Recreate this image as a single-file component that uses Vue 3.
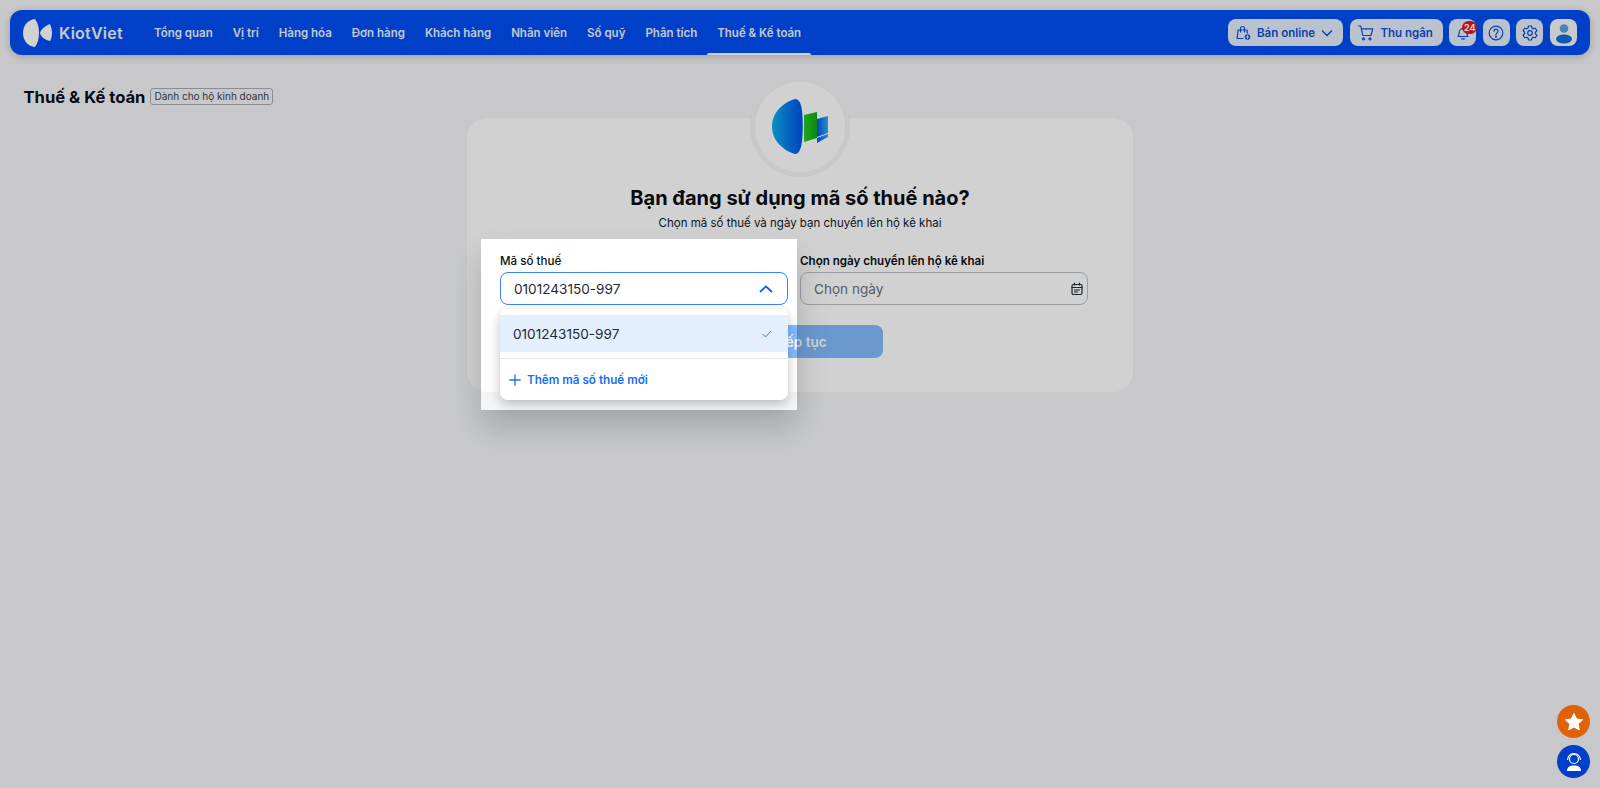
<script setup>
const navItems = ['Tổng quan', 'Vị trí', 'Hàng hóa', 'Đơn hàng', 'Khách hàng', 'Nhân viên', 'Số quỹ', 'Phân tích', 'Thuế & Kế toán']
</script>

<template>
  <div class="page">
    <header class="topbar">
      <div class="brand">
        <svg class="brand-mark" width="30" height="30" viewBox="1 0 30 30">
          <path d="M13 1 C5 2 1 8 1 15 C1 22 5 28 13 29 C16 25 17 20 17 15 C17 10 16 5 13 1 Z" fill="#fff" />
          <path d="M28 6 C23 8 19 11 18 15 C19 19 23 22 28 23 C29.500 20 30 18 30 15 C30 12 29.500 10 28 6 Z" fill="#fff" />
        </svg>
        <span class="brand-name">KiotViet</span>
      </div>
      <nav class="nav">
        <a v-for="(item, i) in navItems" :key="item" class="nav-item" :class="{ active: i === navItems.length - 1 }">{{ item }}</a>
      </nav>
      <div class="actions">
        <button class="action wide online">
          <svg width="18" height="18" viewBox="0 0 18 18" fill="none" stroke="currentColor" stroke-width="1.200" stroke-linejoin="round" stroke-linecap="round">
            <path d="M9 14.500H3.200L4 6h9l.4 3" />
            <path d="M6.500 8V4.500a2 2 0 0 1 4 0V8" />
            <circle cx="13.500" cy="13" r="2.800" fill="currentColor" stroke="none" />
            <path d="M12 13h3M13.500 11.500v3" stroke="#e0ecff" stroke-width="0.900" />
          </svg>
          <span>Bán online</span>
          <svg width="14" height="14" viewBox="0 0 14 14" fill="none" stroke="currentColor" stroke-width="1.400" stroke-linecap="round" stroke-linejoin="round"><path d="M2.500 5l4.500 4.500L11.500 5" /></svg>
        </button>
        <button class="action wide cashier">
          <svg width="18" height="18" viewBox="0 0 18 18" fill="none" stroke="currentColor" stroke-width="1.200" stroke-linecap="round" stroke-linejoin="round">
            <path d="M1.500 2h2.300l2 9.500h8.200l1.700-6.700H4.400" />
            <circle cx="6.500" cy="14.800" r="1" />
            <circle cx="13" cy="14.800" r="1" />
          </svg>
          <span>Thu ngân</span>
        </button>
        <button class="action square bell">
          <svg width="16" height="16" viewBox="0 0 16 16" fill="none" stroke="currentColor" stroke-width="1.200" stroke-linecap="round" stroke-linejoin="round">
            <path d="M3 11.500c1-1 1.200-2 1.200-4a3.800 3.800 0 0 1 7.600 0c0 2 .2 3 1.200 4Z" />
            <path d="M6.500 13.800h3" />
          </svg>
          <span class="badge">24</span>
        </button>
        <button class="action square">
          <svg width="18" height="18" viewBox="0 0 18 18" fill="none" stroke="currentColor" stroke-width="1.200" stroke-linecap="round">
            <circle cx="9" cy="9" r="6.800" />
            <path d="M7 7.200a2 2 0 1 1 3 1.700c-.7.400-1 .8-1 1.500" />
            <circle cx="9" cy="12.700" r="0.500" fill="currentColor" />
          </svg>
        </button>
        <button class="action square">
          <svg width="18" height="18" viewBox="0 0 18 18" fill="none" stroke="currentColor" stroke-width="1.200" stroke-linejoin="round">
            <path d="M7.500 2h3l.5 2 1.400.8 2-.6 1.500 2.600-1.500 1.400v1.600l1.500 1.400-1.500 2.600-2-.6-1.400.8-.5 2h-3l-.5-2-1.400-.8-2 .6-1.500-2.600 1.500-1.400V8.200L2.100 6.800l1.500-2.600 2 .6L7 4Z" />
            <circle cx="9" cy="9" r="2.300" />
          </svg>
        </button>
        <button class="action square avatar">
          <svg width="24" height="24" viewBox="0 0 24 24">
            <circle cx="12" cy="7.500" r="4.300" fill="#5c9fe8" />
            <ellipse cx="12" cy="18" rx="8" ry="4.500" fill="#0d6fd8" />
          </svg>
        </button>
      </div>
    </header>

    <div class="heading">
      <h1>Thuế &amp; Kế toán</h1>
      <span class="tag">Dành cho hộ kinh doanh</span>
    </div>

    <main class="card">
      <div class="emblem">
        <svg width="60" height="60" viewBox="0 0 60 60">
          <defs>
            <linearGradient id="leaf" x1="0" y1="0" x2="1" y2="0">
              <stop offset="0" stop-color="#0cb0f0" />
              <stop offset="1" stop-color="#0050e8" />
            </linearGradient>
            <linearGradient id="green" x1="0" y1="0" x2="1" y2="0">
              <stop offset="0" stop-color="#22cc20" />
              <stop offset="1" stop-color="#10a818" />
            </linearGradient>
            <linearGradient id="blue" x1="0" y1="0" x2="1" y2="0">
              <stop offset="0" stop-color="#0a50f0" />
              <stop offset="1" stop-color="#30b0f8" />
            </linearGradient>
          </defs>
          <path d="M25 2 C12 6 2 16 2 29.500 C2 43 12 53 25 57 C29 57 31 52 32 44 C33 36 33 22 32 14 C31 6 29 2 25 2 Z" fill="url(#leaf)" />
          <path d="M34 18 L47 15 V41 L34 45 Z" fill="url(#green)" />
          <path d="M47 22 L58 19 V36 L47 40 Z" fill="url(#blue)" />
          <path d="M47 41 L58 37 V40 L47 46 Z" fill="url(#blue)" />
        </svg>
      </div>
      <h2 class="card-title">Bạn đang sử dụng mã số thuế nào?</h2>
      <p class="card-sub">Chọn mã số thuế và ngày bạn chuyển lên hộ kê khai</p>

      <div class="form">
        <div class="field">
          <label>Mã số thuế</label>
          <div class="control focused">
            <span>0101243150-997</span>
            <svg width="16" height="16" viewBox="0 0 16 16" fill="none" stroke="#1460e8" stroke-width="1.800" stroke-linecap="round" stroke-linejoin="round"><path d="M2.500 10.500 8 5.500l5.500 5" /></svg>
          </div>
          <div class="dropdown">
            <div class="option">
              <span>0101243150-997</span>
              <svg width="12" height="12" viewBox="0 0 12 12" fill="none" stroke="#3b7de0" stroke-width="1" stroke-linecap="round" stroke-linejoin="round"><path d="M2 6.500 4.500 9 10 3" /></svg>
            </div>
            <div class="divider"></div>
            <div class="add">
              <svg width="12" height="12" viewBox="0 0 12 12" fill="none" stroke="#1470f0" stroke-width="1.300" stroke-linecap="round"><path d="M6 .8v10.400M.8 6h10.400" /></svg>
              <span>Thêm mã số thuế mới</span>
            </div>
          </div>
          <div class="spotlight"></div>
        </div>
        <div class="field">
          <label>Chọn ngày chuyển lên hộ kê khai</label>
          <div class="control">
            <span class="placeholder">Chọn ngày</span>
            <svg width="14" height="14" viewBox="0 0 14 14" fill="none" stroke="#1f2937" stroke-width="1.200" stroke-linecap="round"><rect x="2" y="2.500" width="10" height="10" rx="1.500" /><path d="M2 5.500h10M4.500 1v2M9.500 1v2M4.500 8h5M4.500 10h3" /></svg>
          </div>
        </div>
      </div>

      <button class="submit">Tiếp tục</button>
    </main>

    <aside class="floaters">
      <button class="floater star">
        <svg width="20" height="20" viewBox="0 0 20 20"><path d="M10 1.500l2.600 5.500 6 .8-4.400 4.100 1.100 6L10 15l-5.300 2.900 1.100-6L1.400 7.800l6-.8Z" fill="#fff" stroke="#fff" stroke-linejoin="round" /></svg>
      </button>
      <button class="floater help">
        <svg width="22" height="22" viewBox="0 0 22 22" fill="none">
          <circle cx="11" cy="8" r="4.500" stroke="#fff" stroke-width="1.200" />
          <path d="M4.500 9a6.500 6.500 0 0 1 13 0" stroke="#fff" stroke-width="1.200" />
          <path d="M4 20c0-3.500 2-5.500 7-5.500s7 2 7 5.500Z" fill="#fff" />
        </svg>
      </button>
    </aside>
  </div>
</template>

<style>
html, body { margin: 0; height: 100%; overflow: hidden; }
</style>

<style scoped>
.page {
  position: relative;
  height: 788px;
  overflow: hidden;
  box-sizing: border-box;
  padding: 10px;
  background: #f4f5f7;
  font-family: Inter, "Noto Sans", sans-serif;
  color: #0b0f19;
}
button { font-family: inherit; border: none; cursor: pointer; padding: 0; }

.topbar {
  display: flex;
  align-items: center;
  height: 45px;
  padding: 0 13px;
  border-radius: 12px;
  background: #004ef5;
  box-shadow: 0 2px 8px rgba(0, 0, 0, 0.2);
}
.brand { display: flex; align-items: center; gap: 6px; width: 121px; flex: none; }
.brand-mark { flex: none; }
.brand-name { font-size: 16px; font-weight: 600; color: #f0f4fa; letter-spacing: 0.25px; }
.nav { display: flex; height: 100%; }
.nav-item {
  position: relative;
  display: flex;
  align-items: center;
  padding: 0 10px;
  font-size: 11.500px;
  font-weight: 600;
  color: #eef3fb;
  white-space: nowrap;
}
.nav-item.active::after {
  content: "";
  position: absolute;
  left: 0;
  right: 0;
  bottom: 0;
  height: 2.500px;
  border-radius: 2px 2px 0 0;
  background: #fff;
}
.actions { display: flex; align-items: center; gap: 6.600px; margin-left: auto; }
.action {
  display: flex;
  align-items: center;
  justify-content: center;
  height: 27px;
  border-radius: 8px;
  background: #e2edfa;
  color: #0b4fd8;
  font-size: 11.500px;
  font-weight: 600;
}
.action.wide { gap: 5px; }
.online { width: 115px; padding-right: 3px; box-sizing: border-box; }
.cashier { width: 93px; padding-right: 2px; box-sizing: border-box; }
.square { position: relative; width: 27px; }
.avatar { background: #f4f7fb; }
.badge {
  position: absolute;
  top: 1.500px;
  right: -1px;
  min-width: 15px;
  height: 13px;
  padding: 0 1px;
  box-sizing: border-box;
  border-radius: 7px;
  background: #f01018;
  color: #fff;
  font-size: 9px;
  font-weight: 700;
  line-height: 13px;
  text-align: center;
}

.heading {
  display: flex;
  align-items: center;
  gap: 5px;
  height: 17px;
  margin: 33px 0 0 13.500px;
}
.heading h1 { margin: 0; font-size: 16.600px; font-weight: 700; color: #0a0d14; white-space: nowrap; }
.tag {
  height: 15px;
  padding: 0 3px;
  border: 1px solid #a9adb5;
  border-radius: 3px;
  font-size: 10px;
  line-height: 15px;
  color: #374151;
  white-space: nowrap;
}

.card {
  box-sizing: border-box;
  width: 666px;
  height: 274px;
  margin: 13px auto 0;
  border-radius: 20px;
  background: #fff;
  display: flex;
  flex-direction: column;
  align-items: center;
}
.emblem {
  box-sizing: border-box;
  flex: none;
  display: flex;
  align-items: center;
  justify-content: center;
  width: 100px;
  height: 100px;
  margin-top: -41px;
  border: 5px solid #f4f5f7;
  border-radius: 50%;
  background: #fff;
}
.card-title { margin: 7px 0 0; font-size: 20px; line-height: 28px; font-weight: 700; color: #0a0d14; }
.card-sub { margin: 2px 0 0; font-size: 11.500px; line-height: 18px; color: #111827; }

.form {
  display: flex;
  gap: 12px;
  align-self: flex-start;
  margin: 20px 0 0 33px;
}
.field { position: relative; width: 288px; }
.field label { display: block; font-size: 11.600px; font-weight: 500; line-height: 18px; color: #0a0d14; margin-bottom: 2px; }
.field:last-child label { font-weight: 600; }
.control {
  box-sizing: border-box;
  display: flex;
  align-items: center;
  justify-content: space-between;
  height: 33px;
  padding: 0 3px 0 13px;
  border: 1px solid #bcc1c9;
  border-radius: 8px;
  background: #fff;
  font-size: 13.600px;
  color: #1f2937;
}
.control.focused { border-color: #3b82f6; padding-right: 13px; }
.placeholder { color: #6b7280; }

.dropdown {
  position: absolute;
  z-index: 3;
  top: 57px;
  left: 0;
  right: 0;
  height: 91px;
  padding-top: 6px;
  box-sizing: border-box;
  border-radius: 8px;
  background: #fff;
  box-shadow: 0 4px 12px rgba(0, 0, 0, 0.24);
}
.option {
  display: flex;
  align-items: center;
  justify-content: space-between;
  height: 37px;
  padding: 0 15px 0 13px;
  background: #e3effd;
  font-size: 13.600px;
  color: #1f2937;
}
.divider { height: 1px; margin-top: 6px; background: #e5e7eb; }
.add {
  display: flex;
  align-items: center;
  gap: 6px;
  height: 41px;
  padding-left: 9px;
  font-size: 11.700px;
  font-weight: 600;
  color: #1470f0;
}

.spotlight {
  position: absolute;
  z-index: 4;
  top: -13px;
  left: -19px;
  width: 316px;
  height: 171px;
  pointer-events: none;
  box-shadow: 0 0 0 2000px rgba(0, 0, 0, 0.18), 0 16px 30px rgba(0, 0, 0, 0.18);
}

.submit {
  flex: none;
  width: 166px;
  height: 33px;
  margin-top: 20px;
  border-radius: 8px;
  background: #82bbfe;
  color: #fff;
  font-size: 13.500px;
  font-weight: 600;
}

.floaters {
  position: absolute;
  z-index: 5;
  right: 10px;
  bottom: 10px;
  display: flex;
  flex-direction: column;
  gap: 7px;
}
.floater {
  display: flex;
  align-items: center;
  justify-content: center;
  width: 33px;
  height: 33px;
  border-radius: 50%;
}
.star { background: #df6208; }
.help { background: #0040c8; }
</style>
